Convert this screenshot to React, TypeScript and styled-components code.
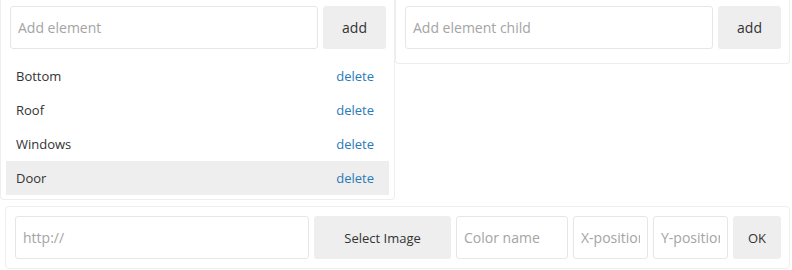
import { useState } from 'react';
import styled, { createGlobalStyle } from 'styled-components';

const GlobalStyle = createGlobalStyle`
  body {
    margin: 0;
    background: #fff;
    font-family: 'Open Sans', 'Liberation Sans', sans-serif;
    color: #333;
  }
  * {
    box-sizing: border-box;
  }
`;

const Page = styled.div`
  width: 792px;
`;

const TopRow = styled.div`
  display: grid;
  grid-template-columns: 395px 395px;
`;

const Panel = styled.div`
  border: 1px solid #eee;
  border-top: none;
  border-radius: 0 0 4px 4px;
  padding: 0 5px 4px 5px;
  align-self: start;
`;

const AddForm = styled.div`
  display: grid;
  grid-template-columns: 308px 63px;
  gap: 5px;
  padding: 6px 0 0 4px;
`;

const TextInput = styled.input`
  height: 43px;
  width: 100%;
  border: 1px solid #e6e6e6;
  border-radius: 3px;
  padding: 0 7px;
  font-family: inherit;
  font-size: 14px;
  color: #333;
  outline: none;
  background: #fff;

  &::placeholder {
    color: #a4a4a4;
  }
`;

const GreyButton = styled.button<{ $size?: number }>`
  height: 43px;
  border: none;
  border-radius: 3px;
  background: #eee;
  color: #333;
  font-family: inherit;
  font-size: ${(p) => p.$size ?? 14}px;
  padding: 0;
  cursor: pointer;
`;

const ElementList = styled.ul`
  list-style: none;
  margin: 10px 0 0;
  padding: 0;
`;

const ElementRow = styled.li<{ $active?: boolean }>`
  display: flex;
  align-items: center;
  justify-content: space-between;
  height: 34px;
  padding: 0 15px 0 10px;
  font-size: 13px;
  background: ${(p) => (p.$active ? '#eee' : 'transparent')};
`;

const DeleteLink = styled.a`
  color: #2a7ab8;
  text-decoration: none;
  cursor: pointer;
`;

const BottomPanel = styled.div`
  margin: 6px 0 0 5px;
  width: 785px;
  border: 1px solid #eee;
  border-radius: 4px;
  padding: 9px;
  display: grid;
  grid-template-columns: 294px 137px 112px 75px 75px 48px;
  column-gap: 5px;
`;

const elements = ['Bottom', 'Roof', 'Windows', 'Door'];

const App = () => {
  const [selected] = useState('Door');

  return (
    <Page>
      <GlobalStyle />
      <TopRow>
        <Panel>
          <AddForm>
            <TextInput placeholder="Add element" />
            <GreyButton>add</GreyButton>
          </AddForm>
          <ElementList>
            {elements.map((name) => (
              <ElementRow key={name} $active={name === selected}>
                <span>{name}</span>
                <DeleteLink>delete</DeleteLink>
              </ElementRow>
            ))}
          </ElementList>
        </Panel>
        <Panel>
          <AddForm>
            <TextInput placeholder="Add element child" />
            <GreyButton>add</GreyButton>
          </AddForm>
          <ElementList />
        </Panel>
      </TopRow>
      <BottomPanel>
        <TextInput placeholder="http://" />
        <GreyButton $size={13}>Select Image</GreyButton>
        <TextInput placeholder="Color name" />
        <TextInput placeholder="X-position" />
        <TextInput placeholder="Y-position" />
        <GreyButton $size={13}>OK</GreyButton>
      </BottomPanel>
    </Page>
  );
};

export default App;
